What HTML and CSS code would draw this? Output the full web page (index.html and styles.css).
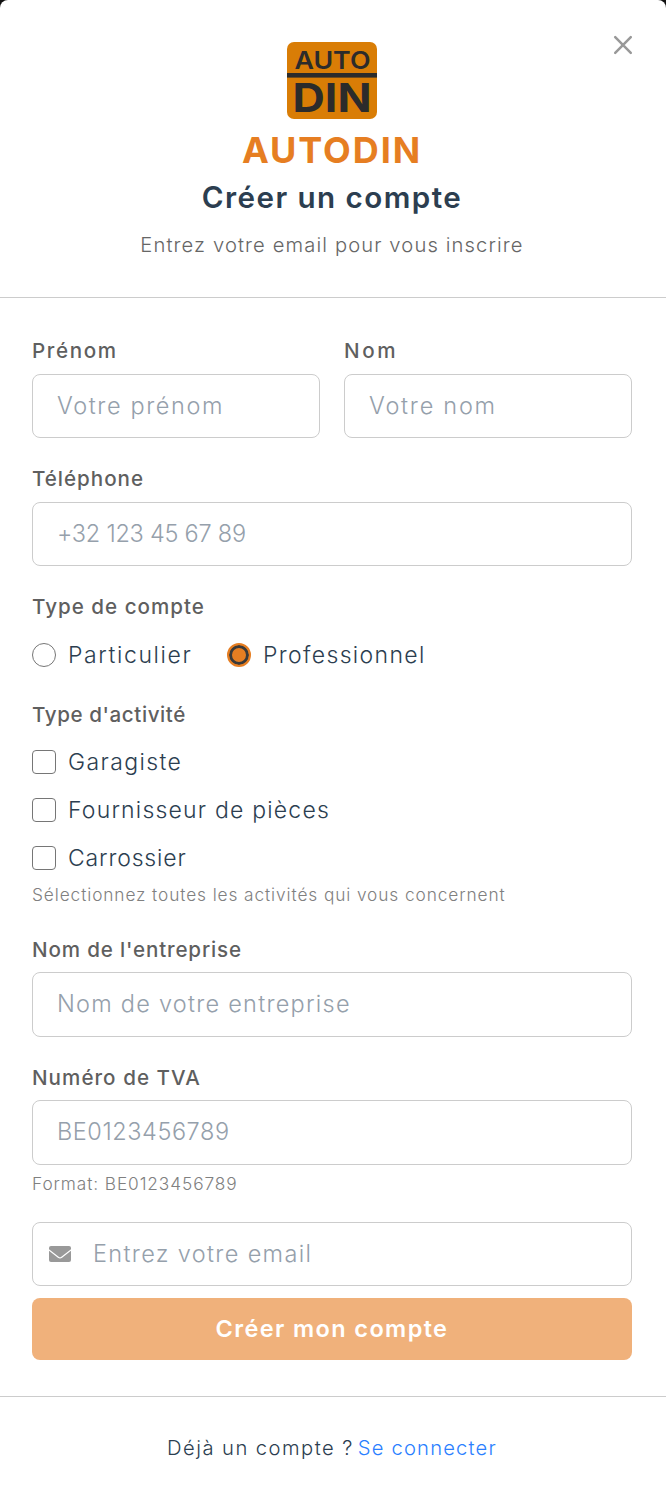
FILE: index.html
```html
<!DOCTYPE html>
<html lang="fr">
<head>
<meta charset="utf-8">
<title>Autodin – Créer un compte</title>
<link rel="stylesheet" href="styles.css">
</head>
<body>
<main class="modal">
  <header class="head">
    <button class="close" aria-label="Fermer"><svg width="20" height="20" viewBox="0 0 20 20"><path d="M2.2 2.2 17.8 17.8M17.8 2.2 2.2 17.8" fill="none" stroke="#999" stroke-width="2.5" stroke-linecap="round"/></svg></button>
    <svg class="logo" width="90" height="77" viewBox="0 0 90 77">
      <rect width="90" height="77" rx="7" fill="#d97d06"/>
      <rect y="31" width="90" height="4.6" fill="#2b2b2b"/>
      <text x="7.5" y="26.6" font-size="24.5" font-weight="600" textLength="76" lengthAdjust="spacingAndGlyphs">AUTO</text>
      <text x="5.5" y="70" font-size="40" font-weight="700" textLength="79" lengthAdjust="spacingAndGlyphs">DIN</text>
    </svg>
    <h1 class="brand">AUTODIN</h1>
    <h2 class="title">Créer un compte</h2>
    <p class="lead">Entrez votre email pour vous inscrire</p>
  </header>
  <form class="form">
    <div class="row">
      <div class="group firstname"><div class="label">Prénom</div><div class="input">Votre prénom</div></div>
      <div class="group lastname"><div class="label">Nom</div><div class="input">Votre nom</div></div>
    </div>
    <div class="group phone"><div class="label">Téléphone</div><div class="input">+32 123 45 67 89</div></div>
    <div class="group account"><div class="label">Type de compte</div>
      <div class="radios">
        <div class="choice private"><i class="radio"></i>Particulier</div>
        <div class="choice pro"><i class="radio on"></i>Professionnel</div>
      </div>
    </div>
    <div class="group activity"><div class="label">Type d'activité</div>
      <div class="choice garage"><i class="check"></i>Garagiste</div>
      <div class="choice parts"><i class="check"></i>Fournisseur de pièces</div>
      <div class="choice bodywork"><i class="check"></i>Carrossier</div>
      <div class="help">Sélectionnez toutes les activités qui vous concernent</div>
    </div>
    <div class="group company"><div class="label">Nom de l'entreprise</div><div class="input">Nom de votre entreprise</div></div>
    <div class="group vat"><div class="label">Numéro de TVA</div><div class="input">BE0123456789</div><div class="help">Format: BE0123456789</div></div>
    <div class="input email"><svg width="22" height="16" viewBox="0 0 22 16"><rect width="22" height="16" rx="2" fill="#999"/><path d="M-.5 3.6 9.3 11.2Q11 12.5 12.7 11.2L22.5 3.6" fill="none" stroke="#fff" stroke-width="1.2"/></svg><span>Entrez votre email</span></div>
    <button class="submit" type="button">Créer mon compte</button>
  </form>
  <footer class="foot"><span>Déjà un compte ?</span> <a>Se connecter</a></footer>
</main>
</body>
</html>
```
FILE: styles.css
```css
*{box-sizing:border-box}
body{margin:0;background:#111;font-family:Inter,"Open Sans",sans-serif;color:#2c3e50}
.modal{width:666px;height:1486px;background:#fff;border-radius:8px 8px 0 0;overflow:hidden}
.head{position:relative;height:298px;padding:42px 2px 0 0;border-bottom:1px solid #ccc;display:flex;flex-direction:column;align-items:center}
.close{position:absolute;left:613px;top:35px;width:20px;height:20px;padding:0;border:0;background:none;display:flex}
.logo{fill:#2b2b2b;flex:none;overflow:visible}
.brand{margin:9px 0 0;font-size:36px;line-height:44px;font-weight:700;color:#e67e22;letter-spacing:1.9px}
.title{margin:5px 0 0;font-size:29.6px;line-height:40px;font-weight:600;letter-spacing:1.45px}
.lead{margin:14px 0 0;font-size:20.2px;line-height:28px;font-weight:350;color:#666;letter-spacing:1.11px}
.form{padding:36px 34px 36px 32px}
.row{display:grid;grid-template-columns:1fr 1fr;gap:24px}
.group{margin-bottom:24px}
.label{height:32px;margin-bottom:8px;line-height:34px;font-size:20.6px;font-weight:450;color:#5f5f5f}
.input{height:64px;padding:0 24px 2px;border:1px solid #ccc;border-radius:8px;display:flex;align-items:center;font-size:23.5px;font-weight:300;color:#95a0ab}
.account{margin-bottom:18px}
.radios{display:flex;height:50px;align-items:center}
.choice{height:48px;display:flex;align-items:center;gap:12px;font-size:23px;font-weight:350}
.private{width:195px}
.radio{width:24px;height:24px;border:1.5px solid #767676;border-radius:50%}
.on{border:2px solid #e67e22;background:#e67e22;box-shadow:inset 0 0 0 3px #3a3a3a}
.check{width:24px;height:24px;border:1.5px solid #767676;border-radius:4px}
.help{height:26px;line-height:26px;font-size:17.3px;font-weight:350;color:#808080;letter-spacing:.9px}
.company .input,.vat .input{height:65px}
.company .label,.vat .label{line-height:36px}
.company{margin-bottom:23px}
.vat .help{margin-top:6px}
.vat{margin-bottom:25px}
.email{padding:0 16px;gap:22px;letter-spacing:1.33px}
.email span{padding-bottom:2px}
.submit{width:100%;height:62px;margin-top:12px;padding:0 6px 2px;border:0;border-radius:8px;background:#f0b17b;color:#fff;font:600 23.5px Inter,sans-serif;letter-spacing:1.38px}
.foot{height:90px;padding:11px 2px 0 0;border-top:1px solid #ccc;display:flex;gap:4px;justify-content:center;align-items:center;font-size:20.2px;font-weight:350;letter-spacing:1.45px}
.foot a{color:#2b7fff;letter-spacing:1.18px}

/* Tracking per field */
.firstname .label{letter-spacing:1.6px}
.firstname .input{letter-spacing:1.6px}
.lastname .label{letter-spacing:2.6px}
.lastname .input{letter-spacing:1.75px}
.phone .label{letter-spacing:.97px}
.phone .input{letter-spacing:-.24px}
.account .label{letter-spacing:1px}
.activity .label{letter-spacing:.58px}
.company .label{letter-spacing:.84px}
.company .input{letter-spacing:1.24px}
.vat .label{letter-spacing:1.04px}
.vat .input{letter-spacing:.56px}
.private{letter-spacing:1.6px}
.pro{letter-spacing:1.35px}
.garage{letter-spacing:1.4px}
.parts{letter-spacing:1.2px}
.bodywork{letter-spacing:.85px}
```
